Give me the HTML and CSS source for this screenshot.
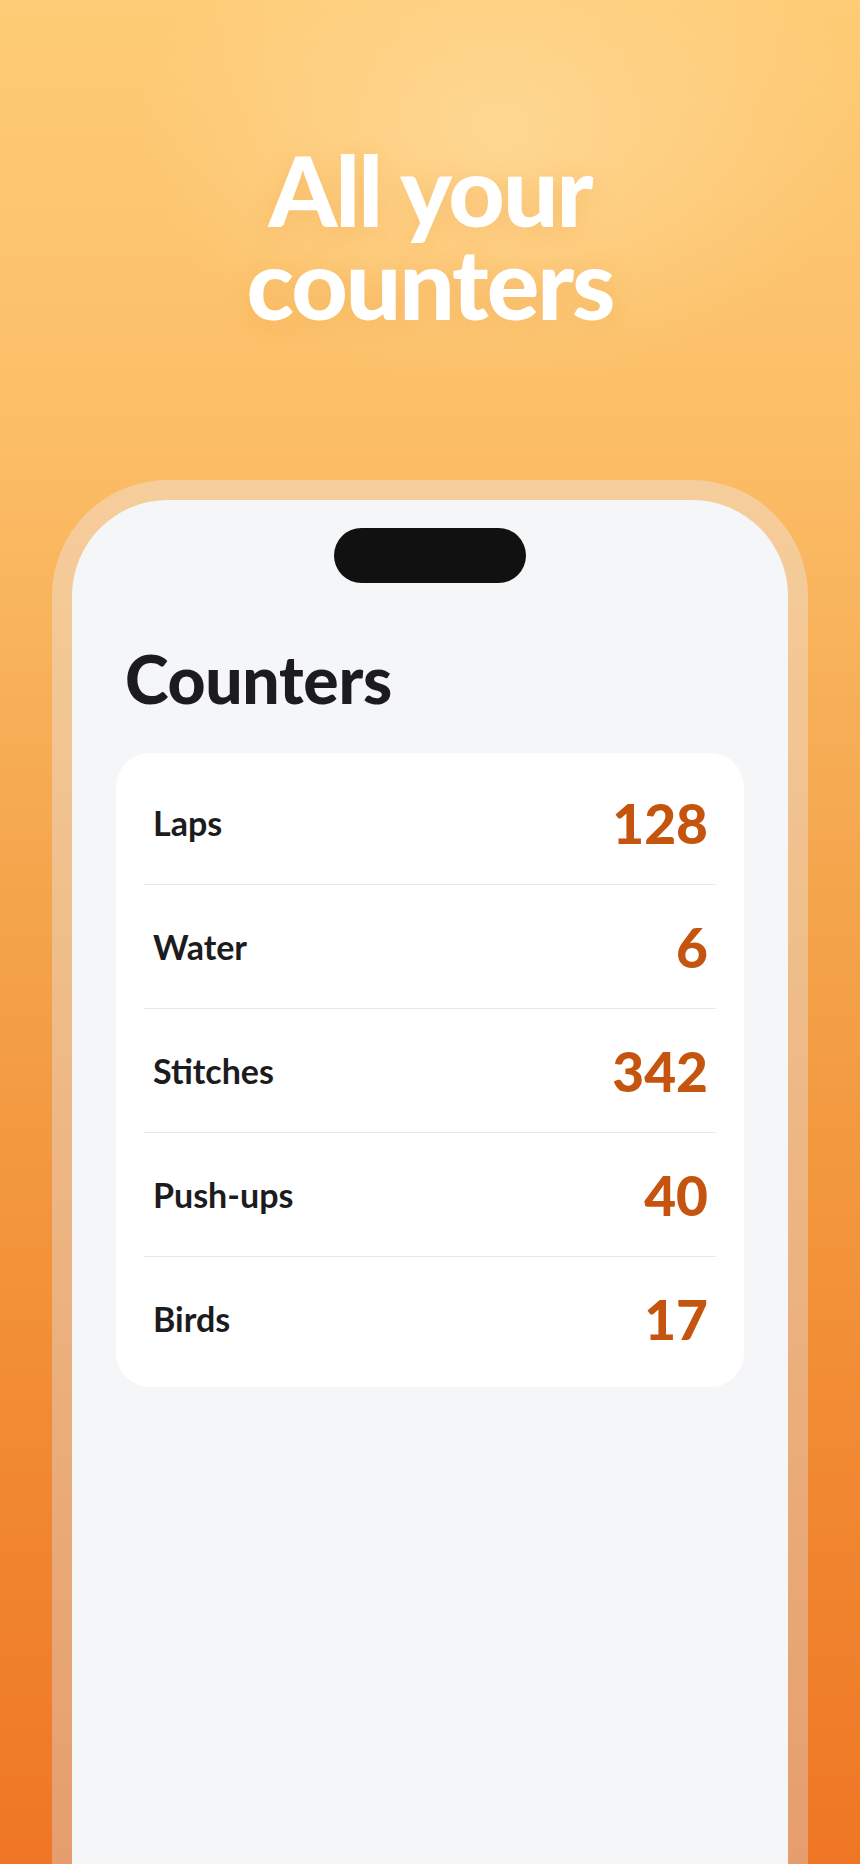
FILE: index.html
```html
<!DOCTYPE html>
<html lang="en">
  <head>
    <meta charset="UTF-8" />
    <meta name="viewport" content="width=device-width, initial-scale=1.0" />
    <title>All your counters</title>
    <link rel="stylesheet" href="styles.css">
  </head>

  <body>
    <header class="hero">
      <h1>All your<br />counters</h1>
    </header>

    <div class="phone">
      <div class="screen">
        <div class="island"></div>
        <h2>Counters</h2>

        <ul class="counter-list">
          <li class="counter">
            <span class="counter-name">Laps</span>
            <span class="counter-value">128</span>
          </li>
          <li class="counter">
            <span class="counter-name">Water</span>
            <span class="counter-value">6</span>
          </li>
          <li class="counter">
            <span class="counter-name">Stitches</span>
            <span class="counter-value">342</span>
          </li>
          <li class="counter">
            <span class="counter-name">Push-ups</span>
            <span class="counter-value">40</span>
          </li>
          <li class="counter">
            <span class="counter-name">Birds</span>
            <span class="counter-value">17</span>
          </li>
        </ul>
      </div>
    </div>
  </body>
</html>
```

FILE: styles.css
```css
html,
body {
  height: 100%;
}

body {
  font-family: Lato, "Noto Sans", sans-serif;
  margin: 0;
  padding: 0;
  height: 1864px;
  overflow: hidden;
  display: flex;
  flex-direction: column;
  align-items: center;
  background:
    radial-gradient(ellipse 520px 360px at 500px 130px, rgba(255, 222, 160, 0.7), rgba(255, 222, 160, 0) 70%),
    linear-gradient(180deg, #fecc76 0%, #fcbf68 22%, #f4a54c 48%, #f28f36 72%, #ef7624 100%);
}

/* Headline */
.hero {
  padding-top: 143px;
  text-align: center;
}

.hero h1 {
  margin: 0;
  color: white;
  font-size: 98px;
  font-weight: 900;
  line-height: 93px;
  letter-spacing: -2px;
  text-shadow: 0 4px 24px rgba(214, 120, 30, 0.18);
}

/* Phone mock */
.phone {
  margin-top: 151px;
  width: 716px;
  flex: 1;
  display: flex;
  padding: 20px 20px 0;
  background: linear-gradient(180deg, rgba(242, 218, 192, 0.6), rgba(222, 190, 170, 0.55));
  border-radius: 116px 116px 0 0;
}

.screen {
  flex: 1;
  background-color: #f5f6f8;
  border-radius: 96px 96px 0 0;
  padding: 28px 44px 0;
  display: flex;
  flex-direction: column;
}

.island {
  align-self: center;
  width: 192px;
  height: 55px;
  border-radius: 28px;
  background-color: #111;
}

.screen h2 {
  margin: 56px 0 34px 9px;
  font-size: 66px;
  font-weight: 900;
  line-height: 80px;
  color: #1c1c1e;
  letter-spacing: -0.3px;
}

/* Counter card */
.counter-list {
  list-style: none;
  margin: 0;
  padding: 8px 0 7px;
  background-color: white;
  border-radius: 34px;
}

.counter {
  height: 123px;
  margin: 0 28px;
  padding: 0 8px 0 9px;
  display: flex;
  align-items: center;
  justify-content: space-between;
  border-bottom: 1px solid #e9e9eb;
}

.counter:last-child {
  border-bottom: none;
}

.counter-name {
  font-size: 34px;
  font-weight: 700;
  color: #1c1c1e;
}

.counter-value {
  font-size: 55px;
  font-weight: 900;
  color: #c5540f;
}
```
